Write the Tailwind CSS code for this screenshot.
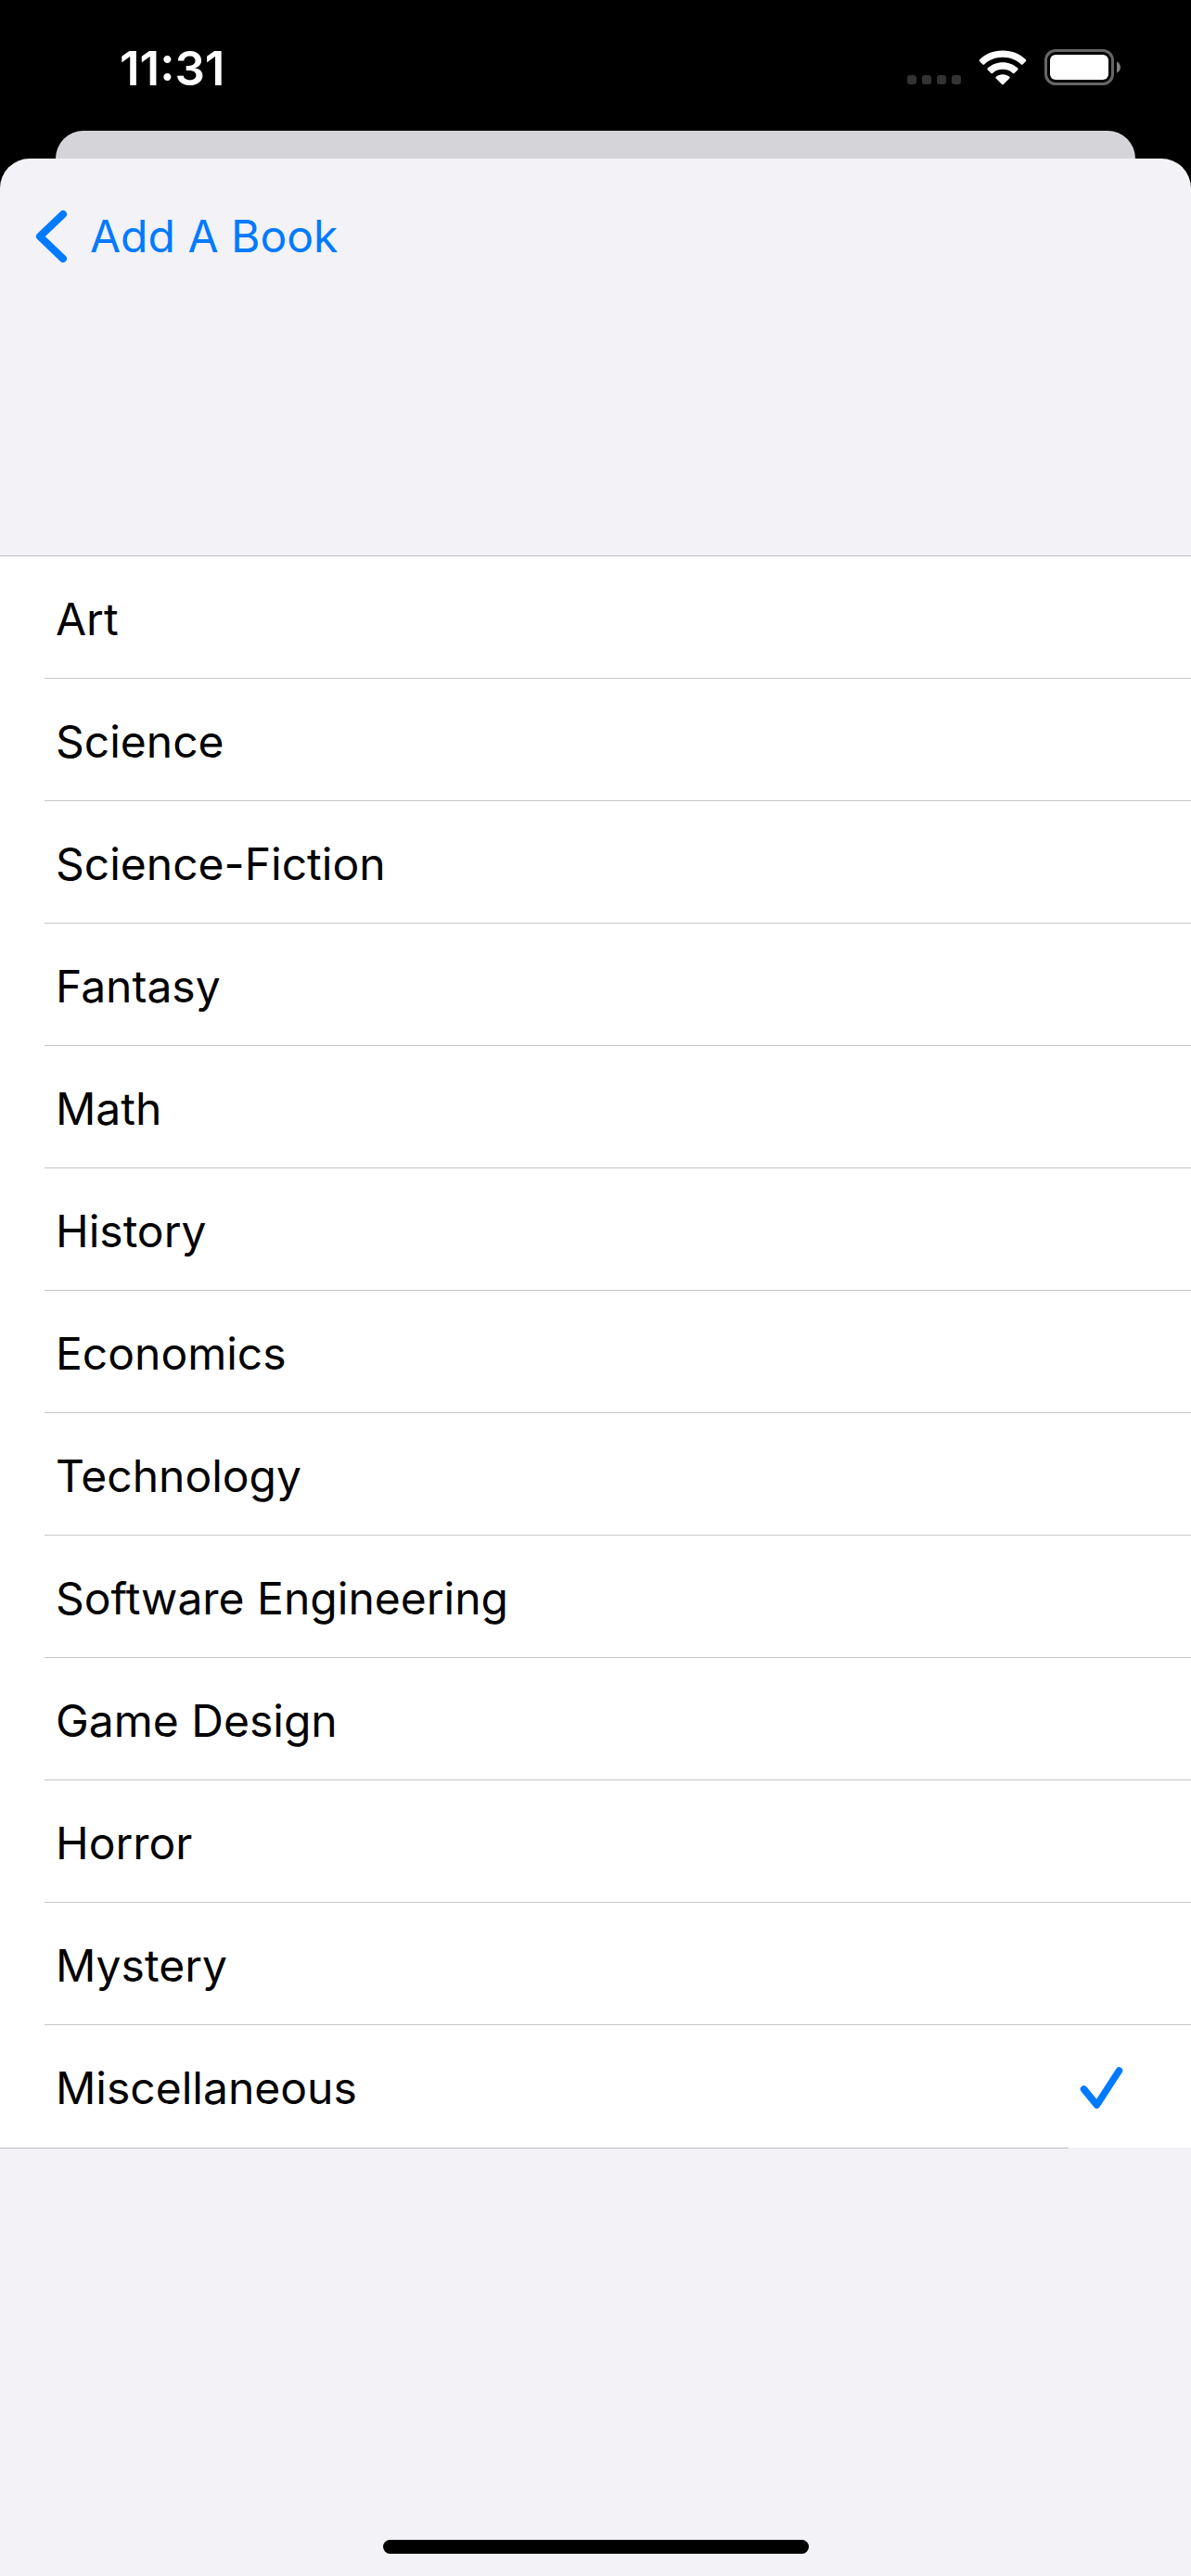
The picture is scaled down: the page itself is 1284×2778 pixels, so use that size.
<!DOCTYPE html>
<html lang="en">
<head>
<meta charset="utf-8">
<meta name="viewport" content="width=device-width, initial-scale=1">
<title>Add A Book</title>
<script src="https://cdn.jsdelivr.net/npm/@tailwindcss/browser@4"></script>
</head>
<body class="flex min-h-screen flex-col bg-black font-[Inter,sans-serif] text-[48px] leading-[60px] text-black">

<!-- Status bar -->
<header class="flex h-[141px] items-start justify-between pt-[44px] pr-[75px] pl-[129px] text-white">
  <time class="text-[51px] font-semibold">11:31</time>
  <div class="flex h-[58px] items-center">
    <div class="mt-[26px] flex gap-[6px]">
      <span class="size-[10px] rounded-[3px] bg-[#333]"></span>
      <span class="size-[10px] rounded-[3px] bg-[#333]"></span>
      <span class="size-[10px] rounded-[3px] bg-[#333]"></span>
      <span class="size-[10px] rounded-[3px] bg-[#333]"></span>
    </div>
    <svg class="ml-[19px] h-[38px] w-[52px]" viewBox="0 0 52 38" fill="#fff" aria-label="Wi-Fi">
      <path d="M26 0.5C36 0.5 45 4.2 51 10.3Q51.800 11.100 51 12L47.500 15.400Q46.700 16.200 45.800 15.400C40.500 10.500 33.500 7.800 26 7.800S11.500 10.500 6.200 15.400Q5.300 16.200 4.500 15.400L1 12Q0.200 11.100 1 10.300C7 4.200 16 0.500 26 0.500Z"/>
      <path d="M26 13.300C32.300 13.300 38 15.600 42.300 19.600Q43 20.300 42.300 21.200L38.500 24.900Q37.700 25.600 36.900 24.900C34 22.300 30.200 20.800 26 20.800S18 22.300 15.100 24.900Q14.300 25.600 13.500 24.900L9.700 21.200Q9 20.300 9.700 19.600C14 15.600 19.700 13.300 26 13.300Z"/>
      <path d="M26 26.300C28.800 26.300 31.300 27.200 33.300 28.800Q34.100 29.500 33.300 30.400L26.800 37Q26 37.700 25.200 37L18.700 30.400Q17.900 29.500 18.700 28.800C20.700 27.200 23.200 26.300 26 26.300Z"/>
    </svg>
    <svg class="ml-[19px] h-[40px] w-[83px]" viewBox="0 0 83 40" aria-label="Battery full">
      <rect x="1.500" y="1.500" width="72" height="36" rx="10.500" fill="none" stroke="#666" stroke-width="3"/>
      <rect x="6" y="6" width="63" height="27" rx="6" fill="#fff"/>
      <path d="M78 13.500C83.300 15.500 83.300 23.500 78 25.500Z" fill="#808080"/>
    </svg>
  </div>
</header>

<!-- Sheet underneath -->
<div class="mx-[60px] h-[30px] rounded-t-[30px] bg-[#d5d4d9]"></div>

<!-- Front sheet -->
<main class="flex flex-1 flex-col rounded-t-[32px] bg-[#f2f2f7]">
  <nav class="flex h-[168px] items-center px-[38px]">
    <a href="#" class="flex items-center gap-[23px] text-[#007aff]">
      <svg class="h-[58px] w-[36px]" viewBox="0 0 36 58" fill="none" stroke="currentColor" stroke-width="8" stroke-linecap="round" stroke-linejoin="round" aria-hidden="true">
        <path d="M30 5L5 29L30 53"/>
      </svg>
      Add A Book
    </a>
  </nav>

  <form class="mt-[260px]">
    <fieldset aria-label="Category">
      <div class="border-t border-[#bcbbc0] bg-white">
        <label class="ml-12 flex h-[132px] items-center border-b border-[#c6c6c8] pt-1 pr-[72px] pl-3"><input type="radio" name="category" class="sr-only">Art</label>
        <label class="ml-12 flex h-[132px] items-center border-b border-[#c6c6c8] pt-1 pr-[72px] pl-3"><input type="radio" name="category" class="sr-only">Science</label>
        <label class="ml-12 flex h-[132px] items-center border-b border-[#c6c6c8] pt-1 pr-[72px] pl-3"><input type="radio" name="category" class="sr-only">Science-Fiction</label>
        <label class="ml-12 flex h-[132px] items-center border-b border-[#c6c6c8] pt-1 pr-[72px] pl-3"><input type="radio" name="category" class="sr-only">Fantasy</label>
        <label class="ml-12 flex h-[132px] items-center border-b border-[#c6c6c8] pt-1 pr-[72px] pl-3"><input type="radio" name="category" class="sr-only">Math</label>
        <label class="ml-12 flex h-[132px] items-center border-b border-[#c6c6c8] pt-1 pr-[72px] pl-3"><input type="radio" name="category" class="sr-only">History</label>
        <label class="ml-12 flex h-[132px] items-center border-b border-[#c6c6c8] pt-1 pr-[72px] pl-3"><input type="radio" name="category" class="sr-only">Economics</label>
        <label class="ml-12 flex h-[132px] items-center border-b border-[#c6c6c8] pt-1 pr-[72px] pl-3"><input type="radio" name="category" class="sr-only">Technology</label>
        <label class="ml-12 flex h-[132px] items-center border-b border-[#c6c6c8] pt-1 pr-[72px] pl-3"><input type="radio" name="category" class="sr-only">Software Engineering</label>
        <label class="ml-12 flex h-[132px] items-center border-b border-[#c6c6c8] pt-1 pr-[72px] pl-3"><input type="radio" name="category" class="sr-only">Game Design</label>
        <label class="ml-12 flex h-[132px] items-center border-b border-[#c6c6c8] pt-1 pr-[72px] pl-3"><input type="radio" name="category" class="sr-only">Horror</label>
        <label class="ml-12 flex h-[132px] items-center border-b border-[#c6c6c8] pt-1 pr-[72px] pl-3"><input type="radio" name="category" class="sr-only">Mystery</label>
        <label class="ml-12 flex h-[132px] items-center justify-between pt-1 pr-[72px] pl-3"><input type="radio" name="category" class="sr-only" checked>Miscellaneous
          <svg class="h-[46px] w-[48px]" viewBox="0 0 48 46" fill="none" stroke="#007aff" stroke-width="7.500" stroke-linecap="round" stroke-linejoin="round" aria-hidden="true">
            <path d="M4.500 24L18.500 41L42.500 4"/>
          </svg>
        </label>
      </div>
      <div class="mr-[132px] h-px bg-[#bcbbc0]"></div>
    </fieldset>
  </form>

  <!-- Home indicator -->
  <div class="mx-auto mt-auto mb-6 h-[15px] w-[459px] rounded-full bg-black"></div>
</main>
</body>
</html>
